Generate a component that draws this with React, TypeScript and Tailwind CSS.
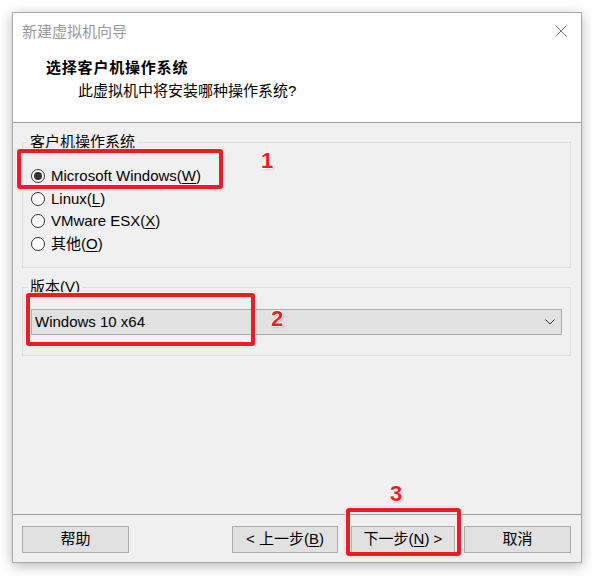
// App.tsx — VMware new VM wizard, guest OS step
const font = { fontFamily: '"Liberation Sans", "Noto Sans CJK SC", sans-serif' };

const osOptions = [
  { id: "win", label: "Microsoft Windows", key: "W", checked: true },
  { id: "linux", label: "Linux", key: "L", checked: false },
  { id: "esx", label: "VMware ESX", key: "X", checked: false },
  { id: "other", label: "其他", key: "O", checked: false },
];

function Radio({ checked }: { checked: boolean }) {
  return (
    <span className="flex h-[14px] w-[14px] items-center justify-center rounded-full border border-[#333] bg-white">
      {checked && <span className="h-[8px] w-[8px] rounded-full bg-[#333]" />}
    </span>
  );
}

function Mnemonic({ text, k }: { text: string; k: string }) {
  return (
    <span>
      {text}(<span className="underline underline-offset-2">{k}</span>)
    </span>
  );
}

function Button({ children, w }: { children: React.ReactNode; w: string }) {
  return (
    <div
      className={`flex h-[27px] items-center justify-center border border-[#adadad] bg-[#e1e1e1] text-[15px] text-black ${w}`}
    >
      {children}
    </div>
  );
}

export default function App() {
  return (
    <div className="relative h-[576px] w-[592px] bg-white pl-[12px] pt-[12px]" style={font}>
      {/* Window */}
      <div className="flex h-[551px] w-[570px] flex-col border border-[#a8a8a8] shadow-[0_3px_12px_rgba(0,0,0,0.28)]">
        {/* Title + header */}
        <div className="h-[110px] border-b border-[#a0a0a0] bg-white">
          <div className="flex h-[38px] items-center justify-between pl-[9px] pr-[14px]">
            <span className="text-[15px] leading-5 text-[#9a9a9a]">新建虚拟机向导</span>
            <svg width="12" height="12" viewBox="0 0 12 12" className="mb-[2px]">
              <path d="M0.5 0.5 L11.5 11.5 M11.5 0.5 L0.5 11.5" stroke="#777" strokeWidth="1" fill="none" />
            </svg>
          </div>
          <div className="mt-[7px] pl-[33px] text-[15px] font-bold leading-5 tracking-[0.8px] text-black">
            选择客户机操作系统
          </div>
          <div className="mt-[3px] pl-[65px] text-[15px] leading-5 text-black">
            此虚拟机中将安装哪种操作系统?
          </div>
        </div>

        {/* Body */}
        <div className="flex-1 bg-[#f0f0f0] pl-[9px] pr-[10px] pt-[9px]">
          <fieldset className="border border-[#dcdcdc] pb-[12px] pl-[5px] pr-[8px]">
            <legend className="px-[2px] text-[15px] leading-5 text-black">客户机操作系统</legend>
            <div className="ml-[3px] pt-[13px]">
              {osOptions.map((o) => (
                <div key={o.id} className="flex h-[22.5px] items-center gap-[6px] text-[15px] text-black">
                  <Radio checked={o.checked} />
                  <Mnemonic text={o.label} k={o.key} />
                </div>
              ))}
            </div>
          </fieldset>

          <fieldset className="mt-[9px] border border-[#dcdcdc] pb-[20px] pl-[5px] pr-[8px]">
            <legend className="px-[2px] text-[15px] leading-5 text-black">版本(V)</legend>
            <div className="ml-[3px] mt-[12px] flex h-[26px] items-center justify-between border border-[#adadad] bg-[#e1e1e1] pl-[3px] pr-[6px]">
              <span className="text-[15px] text-black">Windows 10 x64</span>
              <svg width="10" height="6" viewBox="0 0 10 6">
                <polyline points="0.5,0.5 5,5 9.5,0.5" stroke="#333" strokeWidth="1" fill="none" />
              </svg>
            </div>
          </fieldset>
        </div>

        {/* Footer */}
        <div className="flex h-[48px] border-t border-[#a0a0a0] bg-[#f0f0f0] pl-[9px] pr-[10px] pt-[11px]">
          <Button w="w-[107px]">帮助</Button>
          <div className="ml-auto flex">
            <Button w="w-[106px]">
              <span>
                &lt; 上一步(<span className="underline underline-offset-2">B</span>)
              </span>
            </Button>
            <div className="ml-[13px]">
              <Button w="w-[104px]">
                <span>
                  下一步(<span className="underline underline-offset-2">N</span>) &gt;
                </span>
              </Button>
            </div>
            <div className="ml-[9px]">
              <Button w="w-[107px]">取消</Button>
            </div>
          </div>
        </div>
      </div>

      {/* Red annotations */}
      <div className="absolute left-[17px] top-[149px] h-[40px] w-[206px] rounded-[3px] border-4 border-[#ec1c24] shadow-[0_0_0_1px_rgba(255,255,255,0.8),0_0_3px_rgba(0,0,0,0.3)]" />
      <div className="absolute left-[26px] top-[293px] h-[53px] w-[229px] rounded-[3px] border-4 border-[#ec1c24] shadow-[0_0_0_1px_rgba(255,255,255,0.8),0_0_3px_rgba(0,0,0,0.3)]" />
      <div className="absolute left-[346px] top-[508px] h-[48px] w-[115px] rounded-[3px] border-4 border-[#ec1c24] shadow-[0_0_0_1px_rgba(255,255,255,0.8),0_0_3px_rgba(0,0,0,0.3)]" />

      <span className="absolute left-[261px] top-[150px] text-[22px] font-bold leading-none text-[#ec1c24] [text-shadow:-1px_0_#fff,1px_0_#fff,0_1px_#fff,0_-1px_#fff,1px_1px_2px_rgba(0,0,0,0.35)]">
        1
      </span>
      <span className="absolute left-[271px] top-[308px] text-[22px] font-bold leading-none text-[#ec1c24] [text-shadow:-1px_0_#fff,1px_0_#fff,0_1px_#fff,0_-1px_#fff,1px_1px_2px_rgba(0,0,0,0.35)]">
        2
      </span>
      <span className="absolute left-[390px] top-[483px] text-[22px] font-bold leading-none text-[#ec1c24] [text-shadow:-1px_0_#fff,1px_0_#fff,0_1px_#fff,0_-1px_#fff,1px_1px_2px_rgba(0,0,0,0.35)]">
        3
      </span>
    </div>
  );
}
